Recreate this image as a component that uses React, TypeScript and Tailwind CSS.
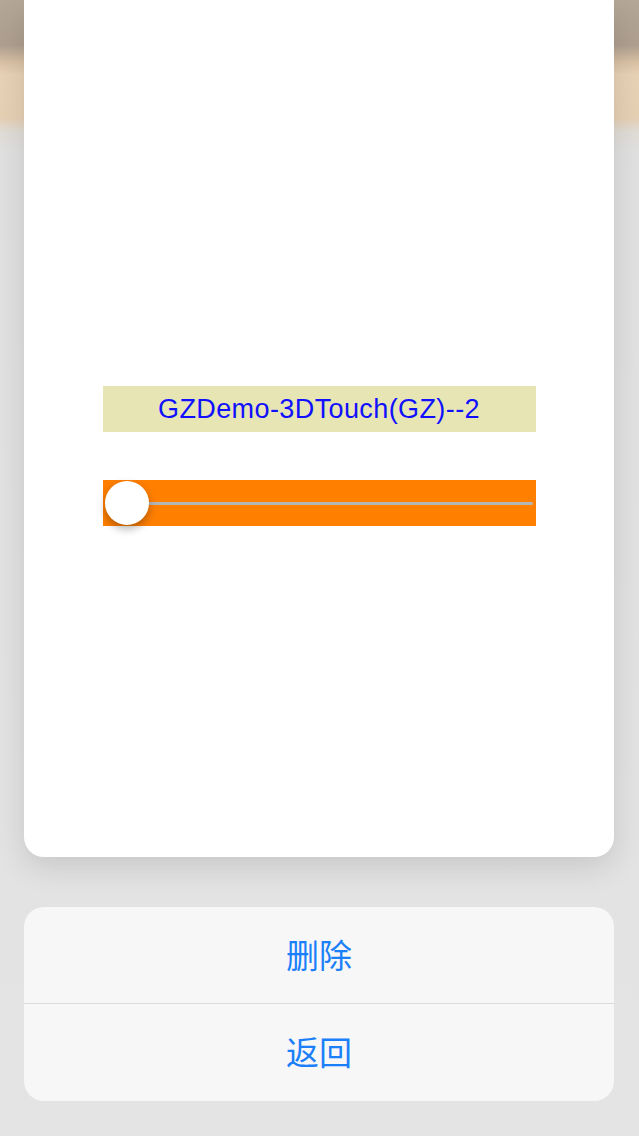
import React from "react";

export default function App() {
  return (
    <div className="w-[639px] h-[1136px] overflow-hidden flex flex-col pl-[24px] pr-[25px] bg-[linear-gradient(to_bottom,#b4a797_0px,#ae9f8f_45px,#d8c0a4_62px,#e8d2b6_75px,#e6d0b4_118px,#e0dcd6_132px,#e0e0e0_150px,#e2e2e2_700px,#e4e4e4_100%)] font-['Liberation_Sans','Noto_Sans_CJK_SC',sans-serif]">
      <div className="h-[857px] shrink-0 bg-white rounded-b-[20px] shadow-[0_10px_30px_rgba(0,0,0,0.12)] flex flex-col items-center pt-[386px]">
        <div className="w-[433px] h-[46px] bg-[#e6e5b3] flex items-center justify-center text-[#1010ff] text-[27px] tracking-[0.4px] leading-none">
          GZDemo-3DTouch(GZ)--2
        </div>
        <div className="relative mt-[48px] w-[433px] h-[46px] bg-[#ff7f00]">
          <div className="absolute left-[24px] right-[3px] top-[22px] h-[3px] rounded-full bg-[#b5b5b5]" />
          <div className="absolute left-[2px] top-[1px] w-[44px] h-[44px] rounded-full bg-white shadow-[0_4px_9px_rgba(0,0,0,0.3)]" />
        </div>
      </div>
      <div className="mt-[50px] rounded-[20px] bg-[#f7f7f7] overflow-hidden flex flex-col text-[#1a7ff9] text-[33px]">
        <div className="h-[96px] flex items-center justify-center pt-[3px]">删除</div>
        <div className="h-px bg-[#dadada]" />
        <div className="h-[97px] flex items-center justify-center pt-[3px]">返回</div>
      </div>
    </div>
  );
}
